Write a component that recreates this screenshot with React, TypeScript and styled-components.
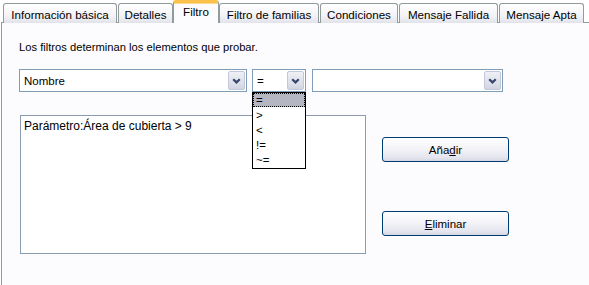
import React from "react";
import styled, { createGlobalStyle, css } from "styled-components";

const Global = createGlobalStyle`
  html, body { margin: 0; padding: 0; background: #ffffff; }
  body { font-family: "Liberation Sans", Arial, sans-serif; font-size: 11px; color: #000; }
  * { box-sizing: border-box; }
`;

const Window = styled.div`
  width: 589px;
  height: 285px;
  background: #ffffff;
  display: flex;
  flex-direction: column;
  overflow: hidden;
`;

const TabStrip = styled.div`
  display: flex;
  align-items: flex-end;
  gap: 1px;
  padding-left: 3px;
  height: 23px;
  position: relative;
  z-index: 1;
`;

const Tab = styled.div<{ $w: number; $active?: boolean }>`
  width: ${(p) => p.$w}px;
  height: 20px;
  flex: none;
  display: flex;
  align-items: center;
  justify-content: center;
  white-space: nowrap;
  font-size: 11.6px;
  border: 1px solid #919b9c;
  border-bottom: none;
  border-radius: 3px 3px 0 0;
  background: linear-gradient(#ffffff, #f3f3f7 60%, #e2e3ea);
  padding-top: 1px;
  ${(p) =>
    p.$active &&
    css`
      height: 23px;
      margin: 0 -1px;
      border-top: 3px solid #f9c04a;
      box-shadow: inset 0 1px 0 #fbd98a;
      background: #fcfcfe;
      padding-top: 0;
      padding-bottom: 3px;
    `}
`;

const Panel = styled.div`
  flex: 1;
  margin-left: 1px;
  margin-top: -1px;
  border-top: 1px solid #919b9c;
  border-left: 1px solid #919b9c;
  background: #fcfcfe;
  padding: 17px 0 0 17px;
  position: relative;
`;

const Description = styled.div`
  line-height: 14px;
  height: 14px;
  font-size: 11.2px;
`;

const ComboRow = styled.div`
  display: flex;
  margin-top: 15px;
  height: 23px;
  position: relative;
`;

const Combo = styled.div<{ $w: number; $gap?: number }>`
  width: ${(p) => p.$w}px;
  margin-right: ${(p) => p.$gap ?? 0}px;
  height: 23px;
  border: 1px solid #7f9db9;
  background: #ffffff;
  display: flex;
  align-items: stretch;
  padding: 1px;
  position: relative;
`;

const ComboText = styled.div`
  flex: 1;
  display: flex;
  align-items: center;
  padding-left: 3px;
  padding-top: 1px;
  font-size: 11.5px;
`;

const ArrowButton = styled.div`
  width: 17px;
  flex: none;
  border: 1px solid #c3c8d8;
  border-radius: 2px;
  background: linear-gradient(#eef0f5, #dcdfe9 70%, #d0d4e2);
  display: flex;
  align-items: center;
  justify-content: center;
`;

const DropList = styled.div`
  position: absolute;
  left: -1px;
  top: 22px;
  width: 54px;
  border: 1px solid #000;
  background: #ffffff;
  z-index: 5;
`;

const DropItem = styled.div<{ $sel?: boolean }>`
  height: 15px;
  line-height: 13px;
  padding-left: 2px;
  font-size: 11.5px;
  border: 1px solid transparent;
  ${(p) =>
    p.$sel &&
    css`
      background: #b4b6c2;
      border: 1px dotted #000;
      height: 14px;
      margin-bottom: 1px;
    `}
`;

const ContentRow = styled.div`
  display: flex;
  margin-top: 23px;
  margin-left: 1px;
`;

const ListBox = styled.div`
  width: 346px;
  height: 139px;
  border: 1px solid #8a9cb2;
  background: #ffffff;
  padding: 4px 3px;
  line-height: 13px;
  font-size: 12px;
  white-space: nowrap;
`;

const ButtonColumn = styled.div`
  display: flex;
  flex-direction: column;
  gap: 49px;
  margin-left: 16px;
  padding-top: 22px;
`;

const Button = styled.div`
  width: 127px;
  height: 25px;
  border: 1px solid #003c74;
  border-radius: 3px;
  background: linear-gradient(#ffffff, #f4f4f8 45%, #e4e5ee 85%, #d4d6e2);
  display: flex;
  align-items: center;
  justify-content: center;
  padding-top: 1px;
  font-size: 11.5px;
`;

const Chevron = () => (
  <svg width="9" height="6" viewBox="0 0 9 6">
    <path d="M1.2 1.2 L4.5 4.4 L7.8 1.2" fill="none" stroke="#36456a" strokeWidth="2.2" />
  </svg>
);

const tabs: { label: string; w: number; active?: boolean }[] = [
  { label: "Información básica", w: 114 },
  { label: "Detalles", w: 55 },
  { label: "Filtro", w: 46, active: true },
  { label: "Filtro de familias", w: 100 },
  { label: "Condiciones", w: 78 },
  { label: "Mensaje Fallida", w: 99 },
  { label: "Mensaje Apta", w: 85 },
];

export default function App() {
  return (
    <Window>
      <Global />
      <TabStrip>
        {tabs.map((t) => (
          <Tab key={t.label} $w={t.w} $active={t.active}>
            {t.label}
          </Tab>
        ))}
      </TabStrip>
      <Panel>
        <Description>Los filtros determinan los elementos que probar.</Description>
        <ComboRow>
          <Combo $w={228} $gap={5}>
            <ComboText>Nombre</ComboText>
            <ArrowButton>
              <Chevron />
            </ArrowButton>
          </Combo>
          <Combo $w={54} $gap={6}>
            <ComboText>=</ComboText>
            <ArrowButton>
              <Chevron />
            </ArrowButton>
            <DropList>
              <DropItem $sel>=</DropItem>
              <DropItem>&gt;</DropItem>
              <DropItem>&lt;</DropItem>
              <DropItem>!=</DropItem>
              <DropItem>~=</DropItem>
            </DropList>
          </Combo>
          <Combo $w={191}>
            <ComboText />
            <ArrowButton>
              <Chevron />
            </ArrowButton>
          </Combo>
        </ComboRow>
        <ContentRow>
          <ListBox>Parámetro:Área de cubierta &gt; 9</ListBox>
          <ButtonColumn>
            <Button>
              Aña<u>d</u>ir
            </Button>
            <Button>
              <u>E</u>liminar
            </Button>
          </ButtonColumn>
        </ContentRow>
      </Panel>
    </Window>
  );
}
